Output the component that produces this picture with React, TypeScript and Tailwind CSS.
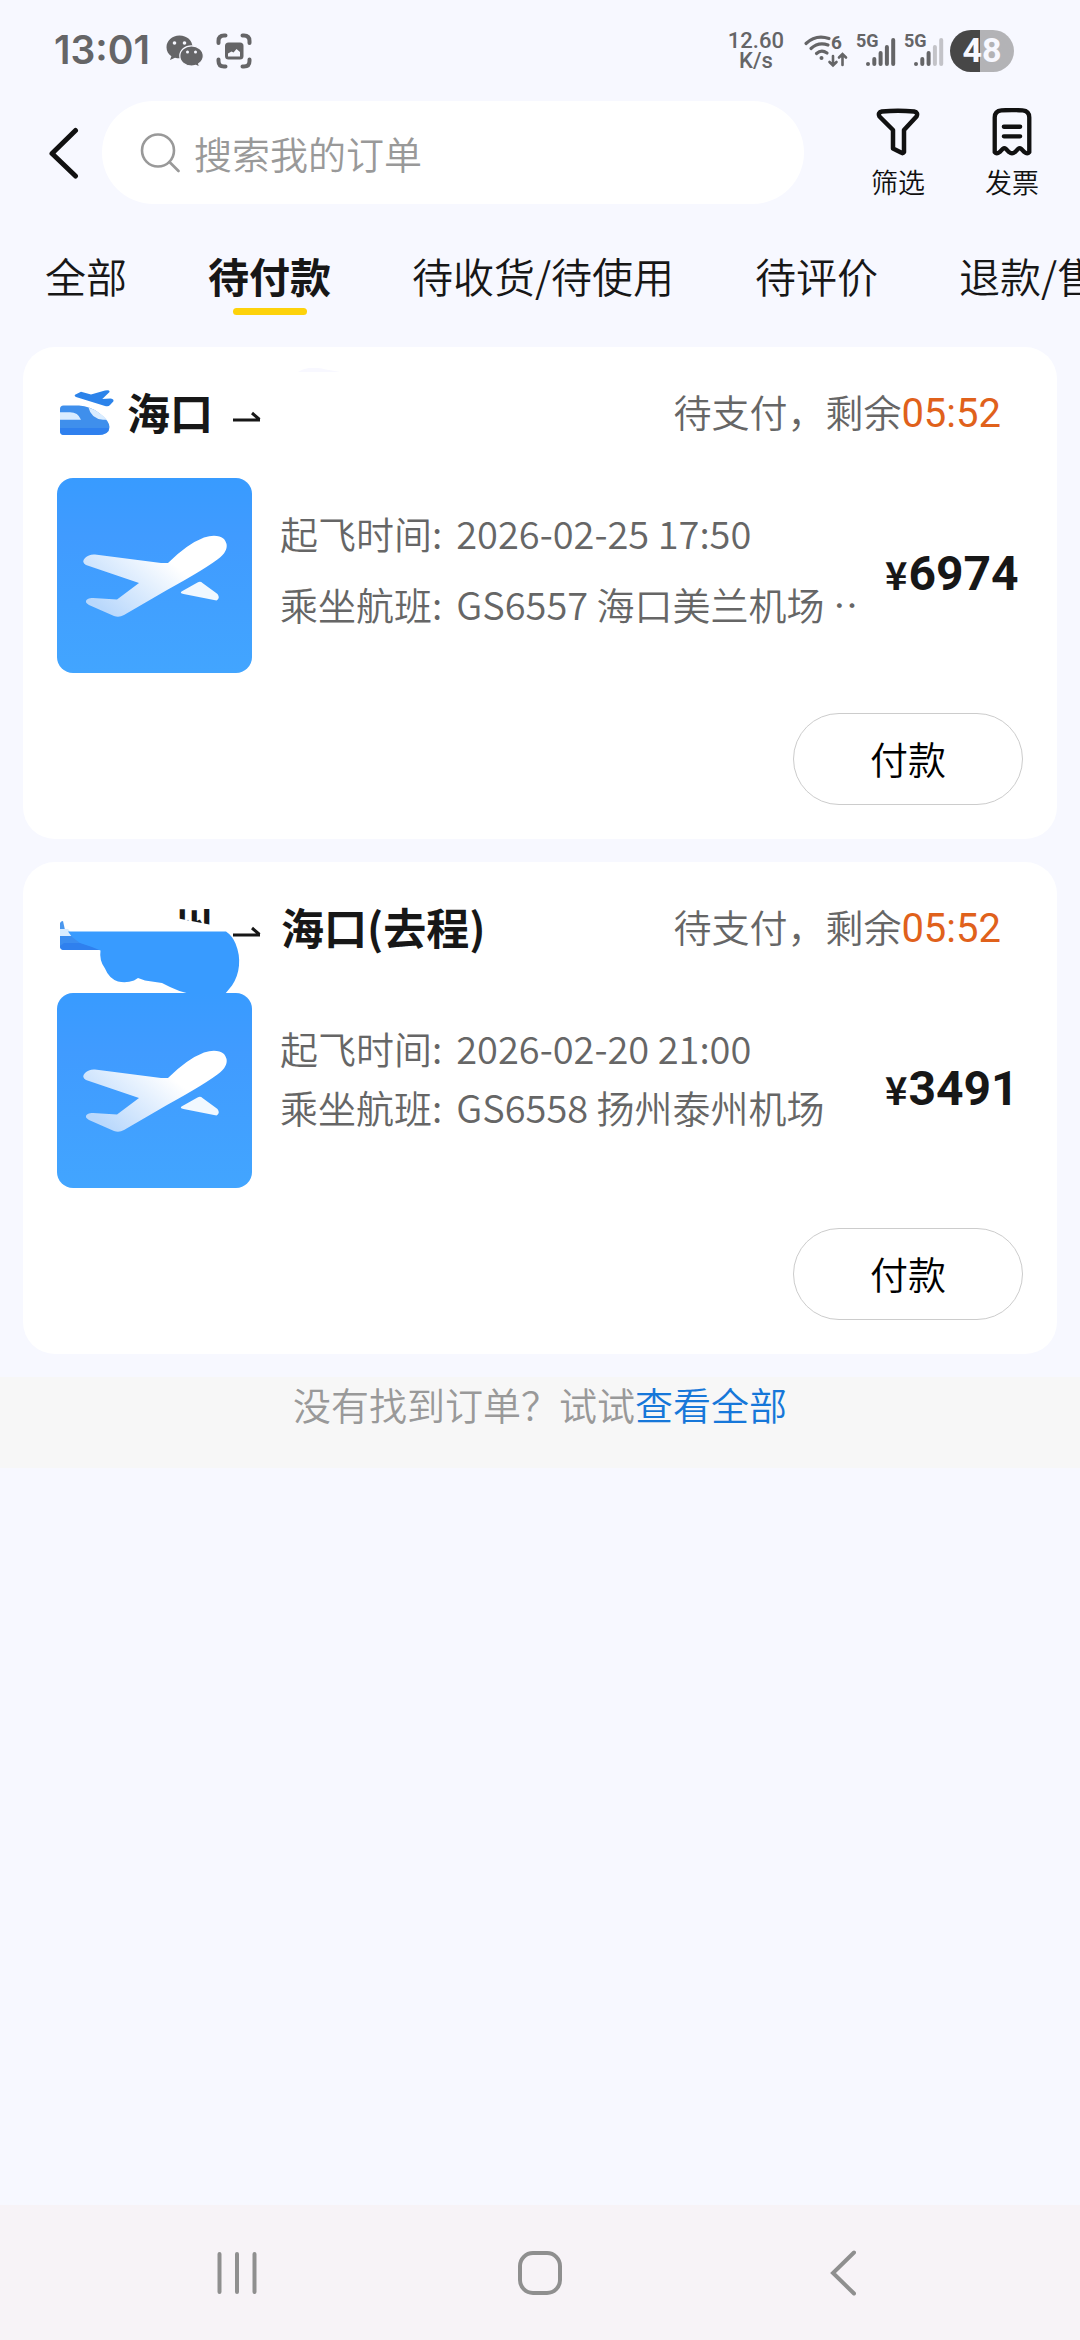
import type { JSX } from 'react'
import { clsx } from 'clsx'

type Order = {
  title: JSX.Element
  remaining: string
  time: string
  flight: string
  price: string
  roomy?: boolean
}

const tabs = ["全部", "待付款", "待收货/待使用", "待评价", "退款/售后"]

const WechatIcon = () => (
  <svg viewBox="0 0 38 32" className="w-[38px] h-8" fill="#656567">
    <path d="M13.5 0.5C6 0.5 0.5 5.8 0.5 12.2c0 3.800 1.900 7 4.900 9.100L4 25l5-2.300c1.400.4 3 .6 4.500.6C21 23.300 26.500 18.500 26.500 12S21 .5 13.500.5z" />
    <path d="M25.500 10.800C19 10.800 13.800 15.300 13.800 21S19 31 25.500 31c1.600 0 3-.3 4.300-.7l3.700 1.700-.8-3.200c2.800-1.900 4.600-4.700 4.600-7.800 0-5.700-5.300-10.200-11.800-10.200z" stroke="#f7f8ff" strokeWidth="1.200" />
    <g fill="#f7f8ff">
      <circle cx="8.500" cy="8" r="1.800" />
      <circle cx="18.500" cy="8" r="1.800" />
      <circle cx="21.500" cy="17" r="1.500" />
      <circle cx="29.500" cy="17" r="1.500" />
    </g>
  </svg>
)

const CaptureIcon = () => (
  <svg viewBox="0 0 36 36" className="size-9" fill="none" stroke="#656567" strokeWidth="4" strokeLinecap="round">
    <path d="M2.500 10V8q0-5.500 5.500-5.500h1.500M26.500 2.500H28q5.500 0 5.500 5.500v2M33.500 26.500V28q0 5.500-5.500 5.500h-1.500M9.500 33.500H8q-5.500 0-5.500-5.500v-1.500" />
    <rect x="9" y="9.500" width="18.500" height="17" rx="3.500" fill="#656567" stroke="none" />
    <path d="M12 23.500v-3l3.500-2 2 1 3-3.500 3.500 3v4.500z" fill="#f7f8ff" stroke="none" />
  </svg>
)

const WifiIcon = () => (
  <svg viewBox="0 0 44 34" className="h-[34px] w-11 overflow-visible" fill="none" stroke="#656567" strokeWidth="3.200" strokeLinecap="round">
    <path d="M2 9.500Q12 0 25 4.500M7 14.500q7.500-7 17-3.500M12.500 19.500q5-4.500 10.500-.5" />
    <circle cx="17.500" cy="24" r="2" fill="#656567" stroke="none" />
    <path d="M29 22v9M25.500 28l3.500 3.500 3.500-3.500M38.500 31v-10.500M35 23.500l3.500-3.500 3.500 3.500" strokeWidth="2.600" />
    <text x="27" y="15" fontSize="19" fontWeight="700" fontFamily="Roboto, sans-serif" fill="#656567" stroke="none">6</text>
  </svg>
)

const SignalIcon = ({ level }: { level: number }) => (
  <svg viewBox="0 0 40 34" className="h-[34px] w-10 overflow-visible" strokeWidth="4" strokeLinecap="round">
    <text x="0" y="13" fontSize="18" fontWeight="700" fontFamily="Roboto, sans-serif" fill="#656567">5G</text>
    {[30, 25, 19, 13, 6].map((top, i) => (
      <path key={top} d={`M${12 + i * 6.3} ${top}V30`} stroke={i < level ? "#656567" : "#c3c3c8"} />
    ))}
  </svg>
)

const StatusBar = () => (
  <div className="flex h-[101px] items-center justify-between pl-[54px] pr-[66px] text-[#656567]">
    <div className="flex items-center gap-3">
      <span className="mr-1 font-[Inter,sans-serif] text-[39px] font-semibold">13:01</span>
      <WechatIcon />
      <CaptureIcon />
    </div>
    <div className="flex items-center font-[Roboto,sans-serif]">
      <div className="mr-5 text-center text-[22px] font-medium leading-5">
        <div>12.60</div>
        <div>K/s</div>
      </div>
      <WifiIcon />
      <div className="ml-2 flex gap-2">
        <SignalIcon level={5} />
        <SignalIcon level={3} />
      </div>
      <div className="ml-1.5 flex h-[42px] w-16 items-center justify-center rounded-full bg-linear-to-r from-[#474747] from-47% to-[#b3b3b6] to-47% text-[34px] font-bold text-[#f7f8ff]">
        48
      </div>
    </div>
  </div>
)

const SearchRow = () => (
  <div className="flex items-center">
    <button type="button" aria-label="返回" className="flex h-[103px] w-[102px] items-center pl-12">
      <svg viewBox="0 0 32 52" className="h-[52px] w-8" fill="none" stroke="#111" strokeWidth="5" strokeLinecap="round" strokeLinejoin="round">
        <path d="M27.500 3.500L4 26.500l23.500 22.500" />
      </svg>
    </button>
    <label className="flex h-[103px] grow items-center gap-3.5 rounded-full bg-white pl-[38px]">
      <svg viewBox="0 0 40 40" className="size-10 shrink-0" fill="none" stroke="#999" strokeWidth="2.600" strokeLinecap="round">
        <circle cx="18" cy="17.500" r="16" />
        <path d="M29.500 29l9 9" />
      </svg>
      <input type="search" aria-label="搜索我的订单" placeholder="搜索我的订单" className="w-full min-w-0 bg-transparent text-[38px] leading-[56px] outline-none placeholder:text-[#999]" />
    </label>
    <div className="flex gap-[60px] pl-[67px] pr-[41px] text-[27px] leading-8 text-[#111]">
      <button type="button" className="flex flex-col items-center gap-2.5">
        <svg viewBox="0 0 44 48" className="h-12 w-11" fill="none" stroke="#111" strokeWidth="4.500" strokeLinejoin="round">
          <path d="M6 3.500Q22 2 38 3.500q4.500 1 2.500 5L28 22v22q-1 2-3 .5l-8-4V22L3.500 8.500q-2-4 2.500-5z" />
        </svg>
        筛选
      </button>
      <button type="button" className="flex flex-col items-center gap-2.5">
        <svg viewBox="0 0 44 50" className="h-12 w-11" fill="none" stroke="#111" strokeWidth="4.500" strokeLinecap="round" strokeLinejoin="round">
          <path d="M4 46V10q0-7 7-7.500 11-.8 22 0 7 .5 7 7.500v36q-2 2.500-5 0l-3.500-3.500q-1.500-1-3 0L25 46q-3 2.500-6 0l-3.500-3.500q-1.500-1-3 0L9 46q-3 2.500-5 0z" />
          <path d="M13.500 19.500h17M13.500 29.500h17" />
        </svg>
        发票
      </button>
    </div>
  </div>
)

const Tabs = () => (
  <nav className="flex h-[143px] gap-[81px] overflow-hidden pl-[45px] pt-10 text-[41px] leading-[62px] text-[#171717]">
    {tabs.map((tab) => {
      const active = tab === "待付款"
      return (
        <button key={tab} type="button" className={clsx("flex shrink-0 flex-col items-center whitespace-nowrap", active && "font-bold")}>
          {tab}
          {active && <span className="mt-0.5 h-[7px] w-[74px] rounded-full bg-[#fdd20b]" />}
        </button>
      )
    })}
  </nav>
)

const TravelIcon = () => (
  <svg viewBox="0 0 58 46" className="h-[46px] w-[58px]">
    <path d="M18 4.700L24 1.700 34 4.500 48 .5q5-1 4.500 1.500L45.300 9l8-.5q4 .5 3 3L53 15q-1.500 2-5 1L19 7q-2-1-1-2.300z" fill="#2c83ea" />
    <path d="M3 19q0-3.500 3.500-3.500H22q11 .5 20 7.500 10.500 8 10.500 14 0 8-11.500 8H7q-4 0-4-4z" fill="#3f8fec" />
    <path d="M3 38h49q-1 7-11 7H7q-4 0-4-4z" fill="#2f80ee" />
    <path d="M3 22.300h10q8 0 11 7.400H3zM31.500 17.500Q42 21 50 29.700h-4q-12-1-14.500-12.200z" fill="#d9ecff" />
  </svg>
)

const Arrow = () => (
  <svg viewBox="0 0 28 12" className="mt-2 h-3 w-7" fill="none" stroke="#171717" strokeWidth="3">
    <path d="M0 9h27M19 2l7.500 6.500" />
  </svg>
)

const Plane = () => (
  <svg viewBox="0 0 195 195" className="size-[195px] shrink-0 rounded-2xl">
    <defs>
      <linearGradient id="sky" x1="0" y1="0" x2="0" y2="1">
        <stop offset="0" stopColor="#389bff" />
        <stop offset="0.300" stopColor="#409bff" />
        <stop offset="1" stopColor="#42a5ff" />
      </linearGradient>
      <linearGradient id="body" x1="0" y1="0.700" x2="0.600" y2="0.300">
        <stop offset="0" stopColor="#b9d8fc" />
        <stop offset="1" stopColor="#fff" />
      </linearGradient>
    </defs>
    <rect width="195" height="195" fill="url(#sky)" />
    <path d="M111 85Q130 66 147 59.500q13-4 20 1.500 7 9-4 18.500Q150 90 110 112L67 137q-5 3-10 1L32 127q-5-3-2-5.500 2-2 6-1.500l24 1.500L82 105 29 87q-5-3-1-7 4-4 10-3.500L104 85z" fill="url(#body)" />
    <path d="M124.500 113.500l16-9q3-1.500 5 .5l15 11q3 4-1 6.500l-33-6.500q-4-1-2-2.500z" fill="#f1f8ff" />
  </svg>
)

const orders: Order[] = [
  {
    title: (
      <>
        <div className="flex items-center gap-3">
          <TravelIcon />
          <span className="pb-1">海口</span>
        </div>
        <Arrow />
        <svg viewBox="0 0 42 4" className="absolute -top-[13px] left-[241px] h-1 w-[42px]" fill="#f8f8ff">
          <path d="M0 4Q10-3 28 1.500L42 4z" />
        </svg>
      </>
    ),
    remaining: "05:52",
    time: "2026-02-25 17:50",
    flight: "GS6557 海口美兰机场 …",
    price: "6974",
    roomy: true,
  },
  {
    title: (
      <>
        <span className="pb-1 pl-[113px]">州</span>
        <Arrow />
        <span className="pb-1">海口(去程)</span>
        {/* brush strokes over the departure city */}
        <svg viewBox="57 896 190 98" className="absolute left-0 top-0 h-[98px] w-[190px]">
          <path d="M165 896H213V907H165zM165 918L176 918 212 925V945H165zM165 896h13v30h-13z" fill="#fff" />
          <path d="M60 923q1-2 3-2l2 9h-5z" fill="#4a97ee" />
          <path d="M60 929h8l6 7H60z" fill="#d9ecff" />
          <path d="M60 936h50v14H64q-4 0-4-4z" fill="#3b8df0" />
          <path d="M64 943l18 0 14 5 5 2H64q-4 0-4-4z" fill="#2f80ee" />
          <path d="M68 931.500H226q6 4 9.500 12 4.500 11 3.500 22-1 11-7 20l-7 8.500H190q-10-2-20-7l-8-4-17-2.500-7-2.500-4 2.500q-8 3-16 1-9-3-13-13-6-8-4.500-18L92 947l-12-4-8-6z" fill="#389bff" />
        </svg>
      </>
    ),
    remaining: "05:52",
    time: "2026-02-20 21:00",
    flight: "GS6558 扬州泰州机场",
    price: "3491",
  },
]

const OrderCard = ({ order }: { order: Order }) => (
  <section className="rounded-[32px] bg-white p-[34px]">
    <div className="relative flex h-[63px] items-center justify-between pr-[22px]">
      <h2 className="flex items-center gap-5 text-[43px] font-bold leading-[60px] text-[#171717]">{order.title}</h2>
      <p className="flex items-baseline text-[38px] text-[#666]">
        待支付，剩余
        <span className="font-[Roboto,sans-serif] text-[40px] font-normal text-[#e0611b]">{order.remaining}</span>
      </p>
    </div>
    <div className="mt-[34px] flex items-center">
      <Plane />
      <div className={clsx("ml-7 flex min-w-0 grow flex-col self-start overflow-hidden whitespace-nowrap pt-[27px] text-[38px] leading-[56px] text-[#666]", order.roomy ? "gap-[15px]" : "gap-[3px]")}>
        <p className="flex gap-3.5"><span>起飞时间:</span>{order.time}</p>
        <p className="flex gap-3.5"><span>乘坐航班:</span>{order.flight}</p>
      </div>
      <p className="ml-7 flex w-[138px] shrink-0 items-baseline gap-px pb-1 font-bold text-[#171717]">
        <span className="text-[38px]">¥</span>
        <span className="font-[Roboto,sans-serif] text-5xl">{order.price}</span>
      </p>
    </div>
    <div className="mt-10 flex justify-end">
      <button type="button" className="h-[92px] w-[230px] rounded-full border border-[#ccc] pb-1 text-[38px] text-black">付款</button>
    </div>
  </section>
)

const NavBar = () => (
  <div className="mt-auto grid h-[135px] grid-cols-3 items-center justify-items-center bg-[#f7f3f7] px-[86px]">
    <button type="button" aria-label="最近任务">
      <svg viewBox="0 0 40 44" className="h-11 w-10" stroke="#8f8f8f" strokeWidth="4" strokeLinecap="round">
        <path d="M2.500 3v38M20 3v38M37.500 3v38" />
      </svg>
    </button>
    <button type="button" aria-label="主屏幕">
      <svg viewBox="0 0 44 44" className="size-11" fill="none" stroke="#8f8f8f" strokeWidth="4">
        <rect x="2" y="2" width="40" height="40" rx="13" />
      </svg>
    </button>
    <button type="button" aria-label="后退">
      <svg viewBox="0 0 26 46" className="h-[46px] w-[26px]" fill="none" stroke="#8f8f8f" strokeWidth="4" strokeLinecap="round">
        <path d="M24 2.500L3 23l21 20.500" />
      </svg>
    </button>
  </div>
)

const App = () => {
  return (
    <div className="flex min-h-screen flex-col bg-[#f7f8ff] font-['Noto_Sans_CJK_SC',sans-serif] font-[350]">
      <StatusBar />
      <SearchRow />
      <Tabs />
      <main className="flex flex-col gap-[23px] px-[23px]">
        {orders.map((order) => (
          <OrderCard key={order.price} order={order} />
        ))}
      </main>
      <p className="mt-[23px] h-[91px] bg-[#f7f7f7] text-center text-[38px] leading-[54px] text-[#999]">
        没有找到订单？试试<a href="#all" className="text-[#1677d9]">查看全部</a>
      </p>
      <NavBar />
    </div>
  )
}

export default App
